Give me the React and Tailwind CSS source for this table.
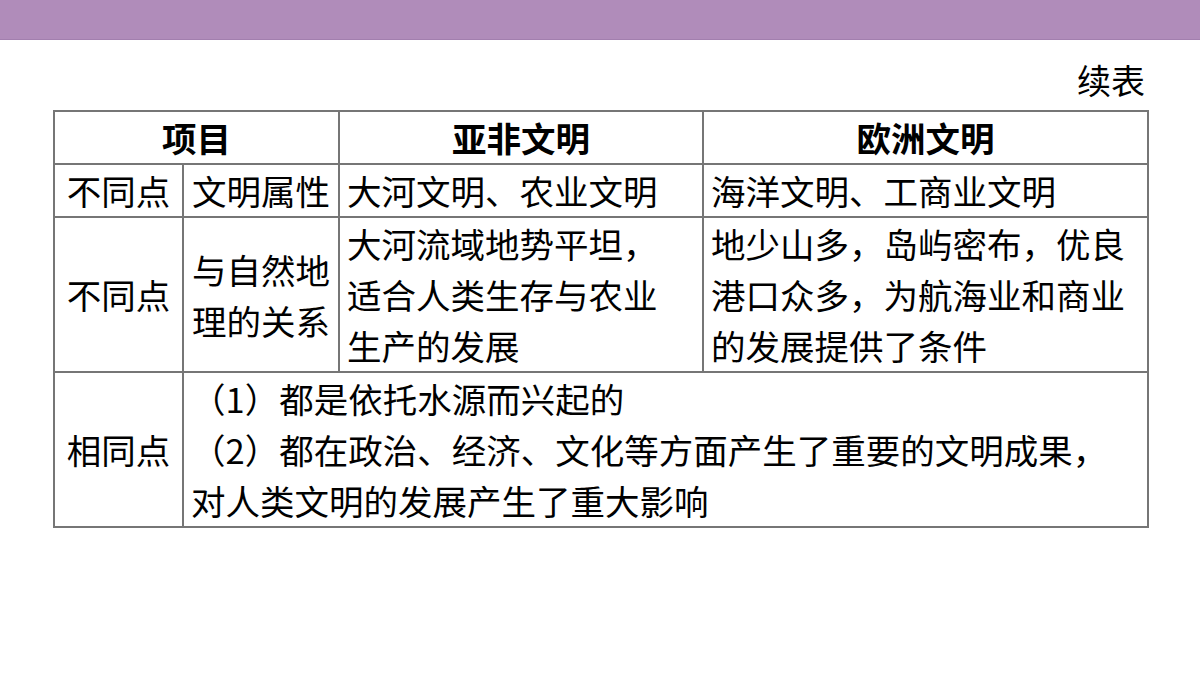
import React from 'react';

const font = { fontFamily: '"Noto Sans CJK SC", "Noto Sans", sans-serif' };

function Cell({ children, className = '', ...rest }) {
  return (
    <td
      {...rest}
      className={`border-2 border-[#767676] p-0 align-middle text-[34.5px] leading-[51px] text-black ${className}`}
    >
      {children}
    </td>
  );
}

export default function App() {
  return (
    <div className="w-[1200px] h-[675px] bg-white overflow-hidden" style={font}>
      <div className="h-[40px] bg-[#b08cba] border-b border-[#a27fae]" />

      <div className="px-[53px]">
        <div className="pt-[14px] text-right text-[34px] leading-[51px] text-black pr-[2px]">续表</div>

        <table className="mt-[5px] border-collapse table-fixed w-[1094px]">
          <colgroup>
            <col className="w-[129px]" />
            <col className="w-[156px]" />
            <col className="w-[364px]" />
            <col className="w-[445px]" />
          </colgroup>
          <tbody>
            <tr>
              <Cell colSpan={2} className="text-center font-bold">项目</Cell>
              <Cell className="text-center font-bold">亚非文明</Cell>
              <Cell className="text-center font-bold">欧洲文明</Cell>
            </tr>
            <tr>
              <Cell className="text-center">不同点</Cell>
              <Cell className="text-center">文明属性</Cell>
              <Cell className="pl-[7px]">大河文明、农业文明</Cell>
              <Cell className="pl-[7px]">海洋文明、工商业文明</Cell>
            </tr>
            <tr>
              <Cell className="text-center">不同点</Cell>
              <Cell className="text-center">
                与自然地
                <br />
                理的关系
              </Cell>
              <Cell className="pl-[7px]">
                大河流域地势平坦，
                <br />
                适合人类生存与农业
                <br />
                生产的发展
              </Cell>
              <Cell className="pl-[7px]">
                地少山多，岛屿密布，优良
                <br />
                港口众多，为航海业和商业
                <br />
                的发展提供了条件
              </Cell>
            </tr>
            <tr>
              <Cell className="text-center">相同点</Cell>
              <Cell colSpan={3} className="pl-[7px]">
                （1）都是依托水源而兴起的
                <br />
                （2）都在政治、经济、文化等方面产生了重要的文明成果，
                <br />
                对人类文明的发展产生了重大影响
              </Cell>
            </tr>
          </tbody>
        </table>
      </div>
    </div>
  );
}
